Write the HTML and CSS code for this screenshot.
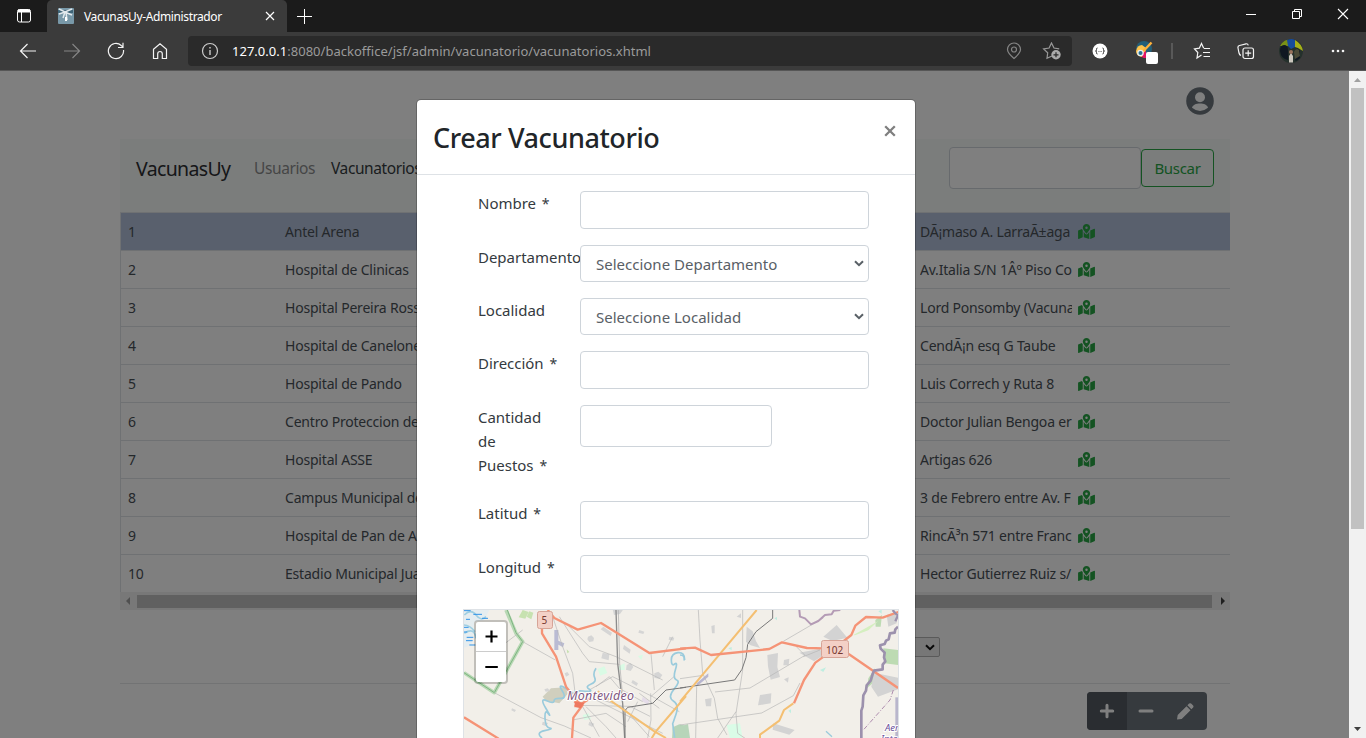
FILE: index.html
```html
<!DOCTYPE html>
<html lang="es">
<head>
<meta charset="utf-8">
<title>VacunasUy-Administrador</title>
<link rel="stylesheet" href="styles.css">
</head>
<body>
<svg class="defs" width="0" height="0">
  <symbol id="marked" viewBox="0 0 576 512"><path d="M288 0c-69.600 0-126 56.400-126 126 0 56.300 82.400 158.800 113.900 196.000 6.400 7.500 17.800 7.500 24.200 0C331.600 284.800 414 182.300 414 126 414 56.400 357.600 0 288 0zm0 168a42 42 0 1 1 0-84 42 42 0 0 1 0 84zM20 216A32 32 0 0 0 0 245.700V496c0 11.300 11.400 19.000 21.900 14.900L160 448V214.900a302 302 0 0 1-25.400-44.700L20 216zm268 143.700c-14.100 0-27.400-6.200-36.500-17-19.700-23.200-40.600-49.600-59.500-76.700V448l192 64V266c-18.900 27.100-39.800 53.500-59.500 76.700a48 48 0 0 1-36.500 17zM554 161.200 416 224v288l139.900-56A32 32 0 0 0 576 426.300V176c0-11.300-11.400-19-22-14.800z"/></symbol>
  <symbol id="chev" viewBox="0 0 10 7"><path d="M1 1.200 5 5.200 9 1.200" fill="none" stroke="currentColor" stroke-width="2"/></symbol>
</svg>
<div class="window">
  <header class="tabs">
    <svg class="tabs-menu" width="16" height="16" viewBox="0 0 16 16" fill="none" stroke="#fff"><rect x="1.500" y="1.500" width="13" height="12.500" rx="2"/><path d="M2 3h12" stroke-width="3"/><path d="M5.500 4v10"/></svg>
    <div class="tab">
      <svg width="16" height="16" viewBox="0 0 16 16"><rect width="16" height="16" rx="1" fill="#7898a8"/><path d="M0 2h15v3H0z" fill="#3f6578"/><path d="M1 1l6 3 7-3M1 6l6-2 7 3M7 4l-2 6M8 4l1 8" stroke="#e2e9ed" stroke-width="1.500" fill="none"/><path d="M7 9h2v4H7z" fill="#fff"/></svg>
      <span class="tab-title">VacunasUy-Administrador</span>
      <svg class="tab-close" width="10" height="10" viewBox="0 0 10 10"><path d="M1 1l8 8M9 1 1 9" stroke="#fff" stroke-width="1.200"/></svg>
    </div>
    <svg class="tab-new" width="15" height="15" viewBox="0 0 15 15"><path d="M7.500 0v15M0 7.500h15" stroke="#fff"/></svg>
    <div class="win-controls">
      <svg width="12" height="12" viewBox="0 0 12 12"><path d="M1 6.500h10" stroke="#fff"/></svg>
      <svg width="12" height="12" viewBox="0 0 12 12" fill="none" stroke="#fff"><path d="M1.500 3.500h7v7h-7zM3.500 3V1.500h7v7H9"/></svg>
      <svg width="12" height="12" viewBox="0 0 12 12"><path d="M1 1l10 10M11 1 1 11" stroke="#fff" stroke-width="1.100"/></svg>
    </div>
  </header>
  <div class="toolbar">
    <div class="nav">
      <svg width="18" height="18" viewBox="0 0 18 18" fill="none" stroke="#f4f4f4" stroke-width="1.200"><path d="M17 9H1.500M8.500 2 1.500 9l7 7"/></svg>
      <svg width="18" height="18" viewBox="0 0 18 18" fill="none" stroke="#858585" stroke-width="1.200"><path d="M1 9h15.500M9.500 2l7 7-7 7"/></svg>
      <svg width="18" height="18" viewBox="0 0 18 18" fill="none" stroke="#f4f4f4" stroke-width="1.200"><path d="M16.500 8A7.600 7.600 0 1 1 14.200 3.500L16 5M16 .8V5.500h-5"/></svg>
      <svg width="18" height="18" viewBox="0 0 18 18" fill="none" stroke="#f4f4f4" stroke-width="1.200"><path d="M2.500 7.200 9 1.800l6.500 5.400v9.300h-4.200v-4.700a2.300 2.300 0 0 0-4.600 0v4.700H2.500z"/></svg>
    </div>
    <div class="address">
      <svg width="18" height="18" viewBox="0 0 18 18" fill="none" stroke="#ccc"><circle cx="9" cy="9" r="7.500" stroke-width="1.200"/><path d="M9 8v5M9 5v1.500" stroke-width="1.400"/></svg>
      <span class="url"><b>127.0.0.1</b>:8080/backoffice/jsf/admin/vacunatorio/vacunatorios.xhtml</span>
      <svg class="pin" width="18" height="18" viewBox="0 0 18 18" fill="none" stroke="#858585" stroke-width="1.200"><path d="M9 16.500C5.500 13.500 2.500 10.500 2.500 7.500a6.500 6.500 0 0 1 13 0c0 3-3 6-6.500 9z"/><circle cx="9" cy="7.500" r="2.500"/></svg>
      <svg class="fav" width="20" height="18" viewBox="0 0 20 18"><path d="M10 14 5 16.300l.7-5.500L1.600 7l5.500-1L9.500 1l2.500 5 5.200.9" fill="none" stroke="#999" stroke-width="1.200"/><circle cx="14" cy="12.800" r="4.700" fill="#aaa"/><path d="M14 10.300v5M11.500 12.800h5" stroke="#2a2a2a" stroke-width="1.200"/></svg>
    </div>
    <svg class="ext1" width="16" height="16" viewBox="0 0 16 16"><circle cx="8" cy="8" r="7.500" fill="#fff"/><path d="M5.500 5Q4.300 5 4.500 6.500T3.500 8q1.200 0 1 1.500T5.500 11M10.500 5q1.200 0 1 1.500T12.500 8q-1.200 0-1 1.500T10.500 11" fill="none" stroke="#333"/><path d="M6.300 8.500h3.600" stroke="#888" stroke-dasharray="1 .3"/></svg>
    <svg class="ext2" width="24" height="24" viewBox="0 0 24 24"><path d="M1 8a8 8 0 0 1 16 0q0 3-2 5H9z" fill="#245f78"/><path d="M1 10Q2 4 7 4l4 3-1 6-3 3Q1 15 1 10" fill="#ffc44b"/><path d="M8 12l3-2v7H9q-2 0-2-2z" fill="#e31665"/><circle cx="5.500" cy="12" r="3.300" fill="#e8eef2"/><circle cx="5.500" cy="12" r="2" fill="#277394"/><path d="M8.500 10 16.500 1.500" stroke="#ffb13b" stroke-width="2.400"/><rect x="11" y="11" width="12" height="12" rx="2" fill="#fff"/></svg>
    <span class="divider"></span>
    <svg class="favs" width="18" height="18" viewBox="0 0 18 18" fill="none" stroke="#f4f4f4" stroke-width="1.200"><path d="M8.500 13 4 16l.8-5.500L1.500 7l4.800-.8L8.500 1.500l2.200 4.700M11 6.500h6M10 10.500h7M10.500 14.500H17"/></svg>
    <svg class="coll" width="18" height="18" viewBox="0 0 18 18" fill="none" stroke="#f4f4f4" stroke-width="1.200"><path d="M4 13.500Q2.500 13 2 11L1 6Q.6 4 2.500 3.500L9 1.800q1.800-.3 2.300 1.500"/><rect x="6" y="6" width="10.500" height="10.500" rx="2"/><path d="M11.200 8.200v6M8.200 11.200h6"/></svg>
    <svg class="avatar" width="24" height="24" viewBox="0 0 24 24"><circle cx="12" cy="12" r="12" fill="#25312c"/><path d="M3 4q4-4 7-3v6H1z" fill="#799116"/><path d="M8 1q5-2 8 0v7l-4 2-3-3z" fill="#174c9c"/><path d="M16 1q7 4 8 11l-5-3-3-1z" fill="#a5b018"/><path d="M1 12q0-6 4-6t4 5v10Q2 20 1 12M16 12q2-5 5 0v7q-4 4-5 2" fill="#101822"/><path d="M15 13q2-5 5-2l1 6-5 3z" fill="#4a4a38"/><path d="M10 17l2-3 2 3v6.500h-4z" fill="#cbc6bd"/><circle cx="12" cy="13" r="2" fill="#99735e"/></svg>
    <svg class="more" width="14" height="4" viewBox="0 0 14 4" fill="#f4f4f4"><circle cx="2" cy="2" r="1.300"/><circle cx="7" cy="2" r="1.300"/><circle cx="12" cy="2" r="1.300"/></svg>
  </div>
  <div class="view">
    <main class="page">
      <div class="user"><svg width="28" height="28" viewBox="0 0 28 28"><circle cx="14" cy="14" r="13.800" fill="#6c757d"/><circle cx="14" cy="10.300" r="5" fill="#fff"/><path d="M6 20.800c1-5.700 15-5.700 16 0q-8 6.500-16 0" fill="#fff"/></svg></div>
      <nav class="navbar">
        <span class="brand">VacunasUy</span><span class="link">Usuarios</span><span class="link active">Vacunatorios</span>
        <span class="search"></span><span class="search-btn">Buscar</span>
      </nav>
      <div class="table">
        <div class="row selected"><span>1</span><span>Antel Arena</span><span class="addr">DÃ¡maso A. LarraÃ±aga</span><svg><use href="#marked"/></svg></div>
        <div class="row"><span>2</span><span>Hospital de Clinicas</span><span class="addr">Av.Italia S/N 1Âº Piso Co</span><svg><use href="#marked"/></svg></div>
        <div class="row"><span>3</span><span>Hospital Pereira Rossell</span><span class="addr">Lord Ponsomby (Vacuna</span><svg><use href="#marked"/></svg></div>
        <div class="row"><span>4</span><span>Hospital de Canelones</span><span class="addr">CendÃ¡n esq G Taube</span><svg><use href="#marked"/></svg></div>
        <div class="row"><span>5</span><span>Hospital de Pando</span><span class="addr">Luis Correch y Ruta 8</span><svg><use href="#marked"/></svg></div>
        <div class="row"><span>6</span><span>Centro Proteccion de</span><span class="addr">Doctor Julian Bengoa er</span><svg><use href="#marked"/></svg></div>
        <div class="row"><span>7</span><span>Hospital ASSE</span><span class="addr">Artigas 626</span><svg><use href="#marked"/></svg></div>
        <div class="row"><span>8</span><span>Campus Municipal de</span><span class="addr">3 de Febrero entre Av. F</span><svg><use href="#marked"/></svg></div>
        <div class="row"><span>9</span><span>Hospital de Pan de Azucar</span><span class="addr">RincÃ³n 571 entre Franc</span><svg><use href="#marked"/></svg></div>
        <div class="row"><span>10</span><span>Estadio Municipal Juan</span><span class="addr">Hector Gutierrez Ruiz s/</span><svg><use href="#marked"/></svg></div>
      </div>
      <div class="hscroll"><svg width="4" height="8" viewBox="0 0 4 8"><path d="M4 0v8L0 4z" fill="#a0a0a0"/></svg><i></i><svg width="4" height="8" viewBox="0 0 4 8"><path d="M0 0v8l4-4z" fill="#404040"/></svg></div>
      <div class="pager"><span><svg width="10" height="7"><use href="#chev"/></svg></span></div>
      <div class="actions"><div class="group">
        <span class="on"><svg width="16" height="16" viewBox="0 0 16 16"><path d="M8 2.300v11.400M2.300 8h11.400" stroke="#fff" stroke-width="3" stroke-linecap="round"/></svg></span>
        <span><svg width="16" height="16" viewBox="0 0 16 16"><path d="M2 8h12" stroke="#fff" stroke-width="3" stroke-linecap="round"/></svg></span>
        <span><svg width="17" height="17" viewBox="0 0 17 17"><path d="M0 16.500.7 12l8.800-8.800 4 4L4.700 16zM10.400 2.300l1.700-1.700q1-.8 2 0l2 2q.8 1 0 2l-1.700 1.700z" fill="#fff"/></svg></span>
      </div></div>
    </main>
    <div class="vscroll"><svg width="7" height="4" viewBox="0 0 7 4"><path d="M0 4h7L3.500 0z" fill="#a0a0a0"/></svg><i></i><svg width="7" height="4" viewBox="0 0 7 4"><path d="M0 0h7L3.500 4z" fill="#404040"/></svg></div>
    <div class="backdrop">
      <section class="modal">
        <div class="modal-head"><h2>Crear Vacunatorio</h2><svg width="12" height="12" viewBox="0 0 12 12"><path d="M1.200 1.200l9.600 9.600M10.800 1.200l-9.600 9.600" stroke="#7f7f7f" stroke-width="2.300"/></svg></div>
        <form class="form">
          <label>Nombre <em>*</em></label><div class="field"></div>
          <label>Departamento</label><div class="field select">Seleccione Departamento<svg width="10" height="7"><use href="#chev"/></svg></div>
          <label>Localidad</label><div class="field select">Seleccione Localidad<svg width="10" height="7"><use href="#chev"/></svg></div>
          <label>Dirección <em>*</em></label><div class="field"></div>
          <label>Cantidad<br>de<br>Puestos <em>*</em></label><div class="field short"></div>
          <label>Latitud <em>*</em></label><div class="field"></div>
          <label>Longitud <em>*</em></label><div class="field"></div>
        </form>
        <div class="map">
          <svg width="434" height="128" viewBox="464 610 434 128" fill="none" stroke-linejoin="round">
            <rect x="464" y="610" width="434" height="128" fill="#f2efe9"/>
            <g transform="translate(456 600) scale(.33333)">
              <path d="M20 30h80l-15 30-30 5-8 70-27 10z" fill="#e5edf0"/>
              <path d="M25 45q20-20 35 0t30 5M25 100q30-20 35 15M22 75q20 0 35 20" stroke="#9fcfe2" stroke-width="5"/>
              <path d="M24 32h20M30 58h12M24 82h14M32 112h20M40 135h18M52 43h26M78 55h18M24 96h10M30 122h20" stroke="#2f93e8" stroke-width="3"/>
              <path d="M188 52l12-22 18 6-10 20zM212 50l8-16 12 4-6 20zM332 148l8 8-6 4z" fill="#c7e2b0"/>
              <path d="M150 30l30 70 20 25-85 153-91-60" stroke="#b8d8b4" stroke-width="11"/><path d="M154 30l26 68 20 27-85 153-91-60" stroke="#7db581" stroke-width="3"/>
              <path d="M260 290l25-25 45-3 5 20-25 28-40-8z" fill="#d0cfbe"/>
              <g fill="#d5d5d5"><path d="M442 80l26 18-4 10-30-20zM396 110l10-4 8 8-2 10-12 2-6-8zM440 158l20 5-2 18-22-6zM504 135l20 14-3 12-20-14zM512 195l12-6 8 12-8 12-14-4zM326 220l8-4 6 8-10 6zM265 268l10-3 8 8-14 2zM550 90l15 5-3 7-15-4zM640 110l15 3-3 9-14-3zM595 220l12-5 12 10-8 12-16-4zM168 325l12 5-4 6-10-5zM260 365l16 4-5 10-13-5zM400 365l15 6-6 10-12-6zM470 28h32l-10 14-18 3zM530 240l16 10-4 8-16-10z"/></g>
              <path d="M295 90h12v60h-12zM307 122l18 8-4 12-16-9z" fill="#babbd3"/>
              <path d="M425 207l20-8 9 20-22 8zM488 198l18-8v20h-16zM380 345l18-5 7 16-20 4zM546 168l15-4-5 16z" fill="#dafbe5"/>
              <path d="M650 382l20-9 24 5v40h-46z" fill="#b7d5b9"/>
              <path d="M560 290l20 14-5 10-18-12z" fill="#e5dce8"/>
              <g stroke="#b7b7b7" stroke-width="2"><path d="M290 50l30 90 30 80 10 80M340 80l60 60 80 30 140 70M310 50l70 110 20 25 90 8M200 125l98 55M150 128l50-38M115 278l140 75 70 25 80 36M400 270l70-40 120 60 80 45M420 260l40-30 30 35 70 40M440 300l60 20 80 90M390 320l60 60 30 34M372 316l150 3 60 30M584 280l1 80-10 54M584 290l70-60M350 360l100-20 60 40M550 280l60 45M620 170l30-60M585 160l10 110M420 300l200 100M545 305l-30 60M380 320l50 90"/></g>
              <path d="M420 205q-10 15-4 28t-12 20-4 15-20 5-20 10-22-12-20 0-4 24-20 8-22-1-3 22 8 17-10 13 14 30-15 8-8 22M686 180q0-24-20-22t-20 22 10 12 2 18 4 30-8 28-2 35 8 40-10 28 6 42" stroke="#9acbdc" stroke-width="5"/>
              <path d="M480 30l5 160 15 120 6 104" stroke="#8c8c8c" stroke-width="4"/><path d="M487 30l4 160 10 112" stroke="#aaa" stroke-width="2"/>
              <path d="M690 262l-60 8-40 40-75 12-8 10v82" stroke="#777" stroke-width="3"/>
              <path d="M425 274l70 50 100 70 35 20M690 288l-91 107-12 20" stroke="#f4bf72" stroke-width="6"/>
              <path d="M275 30l20 24 70 35 70-20 145 90 110-14M258 60v40l42 70 30 90 35 45 15 10-28 38-4 61M24 352l104 64M355 304l15 12 35-23M355 318h25" stroke="#f59376" stroke-width="7"/><path d="M356 305l30 3-12 17-18-5z" fill="#ee7860"/>
            </g>
            <g transform="translate(680 600) scale(.33333)">
              <path d="M610 145l45 5v45l-42-5zM565 235l20-30-2 40-22 20zM586 60l20-15-4 35h-15z" fill="#bddbb3"/>
              <path d="M520 105l75-42-30 28-40 15z" fill="#d5efc0"/>
              <g fill="#d3d3d3"><path d="M200 80l18 14 10 30 12 20-28-8-14-10zM430 110l40-35 32 38-45 10zM358 158l62-12 10 20-28 18zM582 218l72 15v35l-60 22-20-30zM262 165l32-6-2 42 8 30-28 8-8-40zM312 180l16-4-2 20h-16zM240 285l34-5-2 30-38 6zM280 370l64 20-16 14-50-15zM94 78l10-3v25h-8zM312 238l14-6-2 16zM75 298l20-4-2 25h-15zM170 50l13-10v14zM620 45l30-10v35l-25 10z"/></g>
              <path d="M50 250l35-30v10l-36 30z" fill="#b8b6d0"/><path d="M140 375l40-5 8 45h-38z" fill="#dafce7"/><path d="M0 380l24-8 6 42H0z" fill="#b7d5b9"/>
              <path d="M283 55l8-4v10zM420 210l18-8-8 14zM325 332l8-4v12zM145 145l10-4v10zM595 34l10-5v12z" fill="#bfeee1"/>
              <g stroke="#b5b5b5" stroke-width="2"><path d="M55 30l5 90 8 100 35 75 10 60 28 50M188 30v180l-20 130 5 60 30 20M0 236l70-10M105 276l105-12 165-98-25-25M310 124l120-70M0 375l245-36 95-52 20-38M50 260l-3 154M168 335l-55 79M370 170l50-20"/></g>
              <path d="M278 30v25l-50 40-25 38-5 40-12 35-22 32-164 24" stroke="#777" stroke-width="3"/>
              <path d="M230 30L0 305M340 310l-28 20-14 32-58 42v10" stroke="#f4bf72" stroke-width="6"/>
              <path d="M0 146l45-3 48 22 175-18 38-20 75 17 50 1 45-10 38-30 12-28 32-26 50 2 47-17M342 310l30-70 34-52 25-18M506 162l148 102" stroke="#f59376" stroke-width="7"/>
              <path d="M358 30l2 20 15 5 18 18 22-10 20-18 20-2 6-11 20-2" stroke="#b49bb5" stroke-width="6"/>
              <path d="M654 80l-8 8-2 10-14 2-4 18-8 4-4 10-14 4 2 10 12 12-2 14 4 12-8 10v14l-26 4-4 10-6 20-12 14-2 16-8 14-2 34-4 12v92" stroke="#9c91ad" stroke-width="8"/>
              <path d="M638 30l8 10 8 6-8 18" stroke="#9c91ad" stroke-width="7"/><path d="M650 292v122" stroke="#b9b6cc" stroke-width="8"/>
              <path d="M640 270l-10 30-80 90" stroke="#ae8cae" stroke-width="3" stroke-dasharray="14 5 3 5"/>
              <path d="M0 165q15 0 12 17M438 394l18 16" stroke="#9acbdc" stroke-width="4"/>
            </g>
            <g fill="#f3d0c6" stroke="#d6a497"><rect x="537.500" y="611.500" width="15" height="17" rx="2"/><rect x="821.500" y="640.500" width="27" height="17" rx="2"/></g>
            <g class="shield"><text x="541.500" y="624">5</text><text x="826" y="653.500">102</text></g>
            <g class="place"><text class="city" x="567" y="700" textLength="67">Montevideo</text><text x="885" y="731">Aer</text><text x="881" y="742">Inter</text></g>
          </svg>
          <div class="zoom"><span><svg width="13" height="13" viewBox="0 0 13 13"><path d="M6.500 .5v12M.5 6.500h12" stroke="#000" stroke-width="2.200"/></svg></span><span><svg width="13" height="13" viewBox="0 0 13 13"><path d="M.3 6h12.500" stroke="#000" stroke-width="2"/></svg></span></div>
        </div>
      </section>
    </div>
  </div>
</div>
</body>
</html>
```
FILE: styles.css
```css
* { box-sizing: border-box; }
body { margin: 0; font-family: "Noto Sans", "Open Sans", sans-serif; color: #212529; overflow: hidden; }
svg { flex: none; display: block; }
.defs { position: absolute; }
.window { width: 1366px; height: 738px; display: flex; flex-direction: column; overflow: hidden; }

.tabs { height: 32px; flex: none; background: #1b1b1b; display: flex; align-items: center; }
.tabs-menu { margin: 0 15px 0 16px; }
.tab { width: 240px; height: 32px; background: #3b3b3b; border-radius: 5px 5px 0 0; display: flex; align-items: center; padding: 0 12px 0 11px; }
.tab-title { margin-left: 10px; color: #fff; font-size: 12px; letter-spacing: -.38px; white-space: nowrap; }
.tab-close { margin-left: auto; }
.tab-new { margin-left: 10px; }
.win-controls { margin-left: auto; display: flex; gap: 34px; padding-right: 17px; margin-top: -4px; }

.toolbar { height: 39px; flex: none; background: #3b3b3b; border-bottom: 1px solid #565656; display: flex; align-items: center; }
.nav { display: flex; gap: 26px; padding-left: 19px; width: 188px; }
.address { width: 884px; height: 30px; background: #2a2a2a; border-radius: 4px; display: flex; align-items: center; padding-left: 13px; }
.url { margin-left: 13px; font-size: 13px; color: #9b9b9b; white-space: nowrap; letter-spacing: .02px; }
.url b { font-weight: 400; color: #fff; }
.pin { margin-left: auto; }
.fav { margin: 0 10px 0 19px; }
.ext1 { margin-left: 20px; }
.ext2 { margin: 3px 0 0 27px; }
.divider { width: 2px; height: 16px; background: #595959; margin-left: 12px; }
.favs { margin-left: 20px; }
.coll { margin-left: 26px; }
.avatar { margin-left: 24px; }
.more { margin-left: 28px; }

.view { flex: 1; display: flex; position: relative; min-height: 0; }
.page { width: 1349px; padding: 0 119px 0 120px; background: #fff; }
.user { height: 68px; padding: 16px 16px 0 0; display: flex; justify-content: flex-end; }
.navbar { height: 73px; background: #f7faf9; display: flex; align-items: flex-start; padding: 10px 16px 0; }
.brand { font-size: 19.500px; line-height: 40px; width: 118px; letter-spacing: -.65px; color: #2c2f32; }
.link { font-size: 15.500px; line-height: 39px; width: 77px; color: #8b8c8c; letter-spacing: -.4px; }
.link.active { color: #343a40; }
.search { margin-left: auto; width: 192px; height: 42px; background: #fff; border: 1px solid #ced4da; border-radius: 4px; margin-top: -2px; }
.search-btn { width: 73px; height: 38px; border: 1px solid #28a745; border-radius: 4px; color: #28a745; font-size: 15px; line-height: 37px; text-align: center; letter-spacing: -.3px; }
.table { border-left: 1px solid #dee2e6; border-top: 1px solid #dee2e6; }
.row { height: 38px; display: grid; grid-template-columns: 157px 635px 158px 17px; align-items: center; padding: 0 0 0 7px; font-size: 14px; letter-spacing: -.2px; line-height: 20px; color: #495057; border-bottom: 1px solid #dee2e6; white-space: nowrap; }
.row svg { width: 17px; height: 15px; fill: #28a745; }
.row.selected { background: #b3c1da; }
.addr { width: 152px; overflow: hidden; }
.hscroll { height: 18px; background: #f1f1f1; display: flex; align-items: center; padding: 0 5px 0 6px; margin-top: -1px; }
.hscroll i { flex: 1; height: 13px; background: #c1c1c1; margin: 0 9px 0 7px; }
.pager { height: 74px; border-bottom: 1px solid #e4e6e8; display: flex; justify-content: flex-end; padding: 27px 290px 0 0; }
.pager span { width: 50px; height: 20px; border: 1px solid #b5b5b5; background: #efefef; color: #111; border-radius: 2px; display: flex; justify-content: flex-end; align-items: center; padding-right: 4px; }
.actions { padding: 8px 23px 0 0; display: flex; justify-content: flex-end; }
.group { display: flex; border-radius: 4px; overflow: hidden; background: #6c757d; }
.group span { width: 40px; height: 38px; display: flex; align-items: center; justify-content: center; padding-right: 3px; }
.group .on { background: #545b62; padding-right: 1px; }
.vscroll { width: 17px; background: #f1f1f1; display: flex; flex-direction: column; align-items: center; padding: 7px 0 7px; }
.vscroll i { width: 13px; height: 441px; background: #c1c1c1; margin: 6px 0 auto; }

.backdrop { position: absolute; left: 0; top: 0; width: 1349px; height: 667px; background: rgba(0, 0, 0, .5); padding: 28px 0 0 416px; overflow: hidden; }
.modal { width: 500px; height: 700px; background: #fff; background-clip: padding-box; border: 1px solid rgba(0, 0, 0, .2); border-radius: 5px; }
.modal-head { height: 75px; border-bottom: 1px solid #dee2e6; display: flex; justify-content: space-between; padding: 18px 19px 0 16px; }
.modal-head h2 { margin: 0; font-size: 27px; line-height: 40px; font-weight: 500; letter-spacing: -.42px; }
.modal-head svg { margin-top: 7px; }
.form { padding: 16px 46px 0 61px; display: grid; grid-template-columns: 102px 289px; grid-template-rows: 38px 37px 37px 38px 80px 38px 38px; row-gap: 16px; }
.form label { font-size: 15px; line-height: 24px; white-space: nowrap; color: #343a40; letter-spacing: -.02px; }
.form label em { font-style: normal; font-size: 14px; margin-left: 2px; }
.field { height: 100%; border: 1px solid #ced4da; border-radius: 4px; }
.field.short { width: 192px; height: 42px; }
.select { display: flex; align-items: center; justify-content: space-between; padding: 0 4px 0 15px; color: #596066; font-size: 15px; white-space: nowrap; }
.map { position: relative; width: 436px; height: 200px; margin: 16px 0 0 46px; border: 1px solid #dee2e6; }
.zoom { position: absolute; left: 10px; top: 10px; width: 34px; border: 2px solid rgba(0, 0, 0, .2); background-clip: padding-box; border-radius: 4px; background-color: #fff; }
.zoom span { height: 30px; display: flex; align-items: center; justify-content: center; }
.zoom span:first-child { border-bottom: 1px solid #ccc; }
.shield { font-size: 10px; fill: #76372f; }
.place { font-size: 9.500px; font-style: italic; fill: #6b4f99; paint-order: stroke; stroke: #fff; stroke-width: 2px; }
.place .city { font-size: 12.500px; fill: #80587f; }
```
